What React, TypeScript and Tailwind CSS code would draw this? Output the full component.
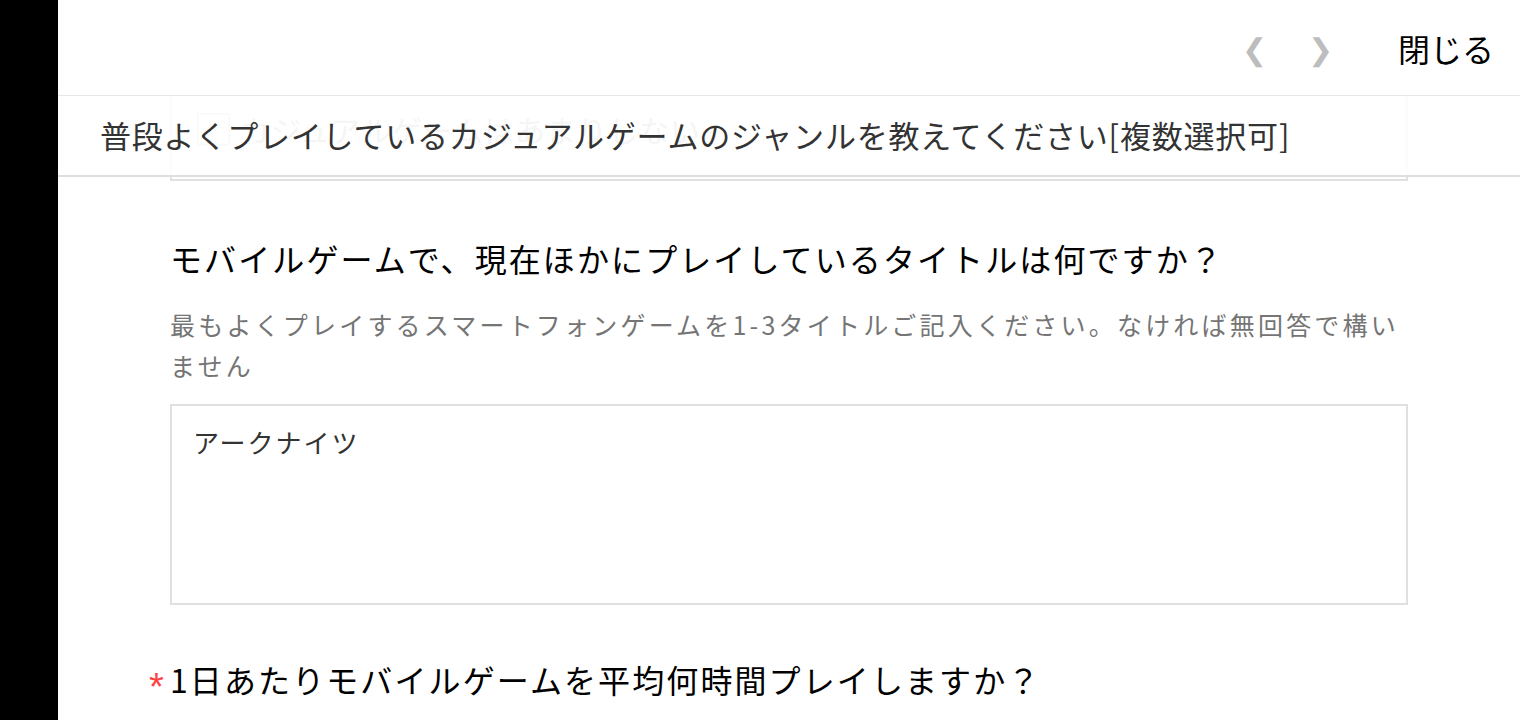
import React from "react";

const font = "font-['Noto_Sans_CJK_JP','Noto_Sans',sans-serif]";

function Header() {
  return (
    <div className="flex h-[96px] items-center justify-end border-b border-[#e6e6e6] bg-white pr-[26px] shadow-[0_1px_2px_rgba(0,0,0,0.04)]">
      <div className="flex items-center gap-[46px] text-[30px] text-[#bdbdbd]">
        <span className="w-[20px] text-center">❮</span>
        <span className="w-[20px] text-center">❯</span>
      </div>
      <div className="ml-[70px] text-[32px] text-black">閉じる</div>
    </div>
  );
}

function StickyQuestion() {
  return (
    <div className="relative h-[85px]">
      {/* previous question's option box, scrolled under the bar */}
      <div className="ml-[112px] mr-[112px] h-[85px] border-x-2 border-b-2 border-[#e0e0e0] pl-[25px] pt-[11px]">
        <div className="flex items-center gap-[10px]">
          <div className="h-[33px] w-[33px] rounded-[3px] border-2 border-[#cfcfcf]" />
          <span className="text-[30px] tracking-[1px] text-[#999]">カジュアルゲームはあまりしない</span>
        </div>
      </div>
      <div className="absolute left-0 right-0 top-0 flex h-[81px] items-center border-b-2 border-[#dedede] bg-white/90 pl-[42px]">
        <span className="text-[31px] tracking-[0.8px] text-[#333]">
          普段よくプレイしているカジュアルゲームのジャンルを教えてください[複数選択可]
        </span>
      </div>
    </div>
  );
}

export default function App() {
  return (
    <div className={`flex h-[720px] w-full overflow-hidden ${font}`}>
      <div className="w-[58px] shrink-0 bg-black" />
      <div className="flex-1 bg-white">
        <Header />
        <StickyQuestion />
        <div className="px-[112px]">
          <div className="mt-[55px] text-[32px] leading-[44px] tracking-[2.1px] text-black">
            モバイルゲームで、現在ほかにプレイしているタイトルは何ですか？
          </div>
          <div className="mt-[24px] text-[25px] leading-[41px] tracking-[3.2px] text-[#757575]">
            最もよくプレイするスマートフォンゲームを1-3タイトルご記入ください。なければ無回答で構いません
          </div>
          <div className="mt-[18px] h-[201px] border-2 border-[#e0e0e0] px-[21px] py-[16px] text-[26px] tracking-[2px] text-[#333]">
            アークナイツ
          </div>
          <div className="relative mt-[52px] text-[32px] leading-[44px] tracking-[2.1px] text-black">
            <span className="absolute -left-[21px] top-[11px] font-['Liberation_Sans',sans-serif] text-[38px] leading-none text-[#f44]">*</span>
            1日あたりモバイルゲームを平均何時間プレイしますか？
          </div>
        </div>
      </div>
    </div>
  );
}
